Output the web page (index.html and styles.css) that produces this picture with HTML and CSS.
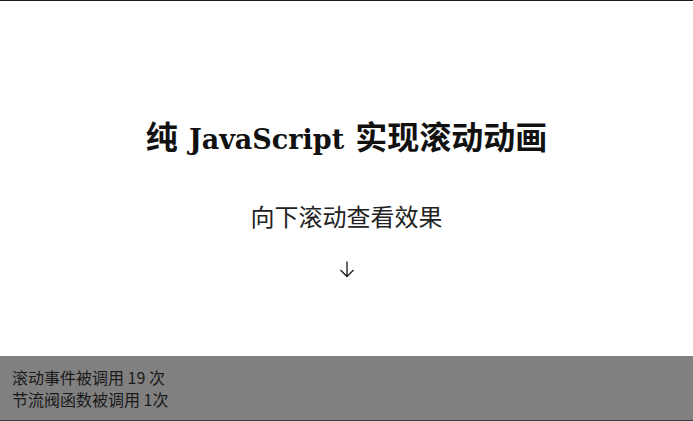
FILE: index.html
```html
<!DOCTYPE html>
<html lang="zh-CN">
<head>
<meta charset="utf-8">
<title>纯 JavaScript 实现滚动动画</title>
<link rel="stylesheet" href="styles.css">
</head>
<body>
<main class="hero">
  <h1 class="title">纯 <span class="latin">JavaScript</span> 实现滚动动画</h1>
  <p class="subtitle">向下滚动查看效果</p>
  <div class="arrow" aria-label="↓">
    <svg width="16" height="18" viewBox="0 0 16 18" aria-hidden="true">
      <path d="M8 1.5V16.5M1.5 10L8 16.5L14.5 10" fill="none" stroke="#1a1a1a" stroke-width="1.3"/>
    </svg>
  </div>
</main>
<div class="stats">
  <div class="stat">滚动事件被调用 19 次</div>
  <div class="stat">节流阀函数被调用 1次</div>
</div>
</body>
</html>
```

FILE: styles.css
```css
html, body {
  margin: 0;
  padding: 0;
  background: #ffffff;
}
body {
  border-top: 1px solid #1a1a1a;
  font-family: "Noto Sans CJK SC", "Noto Sans", sans-serif;
  color: #111;
}
.hero {
  display: flex;
  flex-direction: column;
  align-items: center;
  padding-top: 117px;
}
.title {
  margin: 0;
  font-size: 32px;
  line-height: 40px;
  font-weight: 700;
  font-family: "DejaVu Serif", "Noto Sans CJK SC", serif;
  color: #111;
}
.title .latin {
  font-family: "DejaVu Serif", serif;
  font-size: 27px;
}
.subtitle {
  margin: 40px 0 0;
  font-size: 24px;
  line-height: 32px;
  font-weight: 400;
  color: #222;
}
.arrow {
  margin-top: 28px;
  display: flex;
  width: 16px;
  height: 18px;
}
.stats {
  position: fixed;
  left: 0;
  right: 0;
  bottom: 0;
  background: #808080;
  border-bottom: 1px solid #3b404a;
  padding: 10px 12px;
  font-size: 16px;
  line-height: 22px;
  color: #1a1a1a;
}
```
